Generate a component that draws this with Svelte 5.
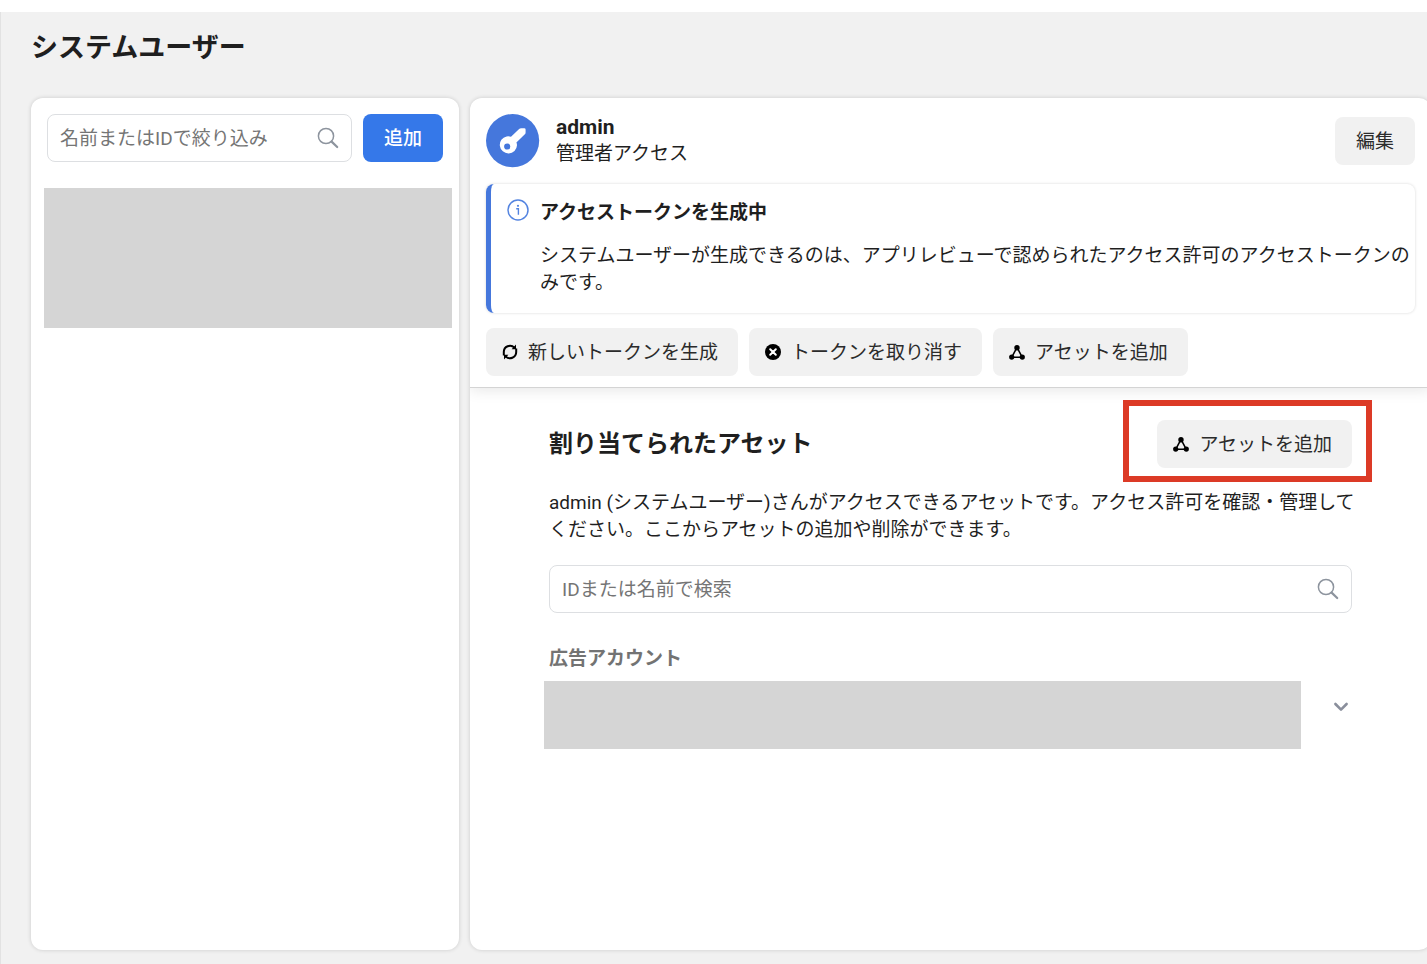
<script lang="ts">
    let userFilter = $state('');
    let assetFilter = $state('');
    let expanded = $state(false);
</script>

{#snippet searchIcon()}
    <svg class="search-icon" viewBox="0 0 22 22" width="22" height="22" fill="none" stroke="#8d949e" aria-hidden="true">
        <circle cx="9" cy="9" r="7.6" stroke-width="1.5" />
        <path d="M14.6 14.6L20.2 20" stroke-width="2.2" stroke-linecap="round" />
    </svg>
{/snippet}

{#snippet assetIcon()}
    <svg viewBox="0 0 16 16" width="16" height="16" aria-hidden="true">
        <path d="M8 3.4L2.8 13.2H13.2Z" fill="none" stroke="#000" stroke-width="1.6" />
        <circle cx="8" cy="3.8" r="2.7" />
        <circle cx="2.7" cy="13.1" r="2.6" />
        <circle cx="13.3" cy="13.1" r="2.6" />
    </svg>
{/snippet}

<div class="page">
    <h1>システムユーザー</h1>

    <div class="columns">
        <aside class="panel users">
            <div class="toolbar">
                <div class="field">
                    <input type="text" aria-label="名前またはIDで絞り込み" placeholder="名前またはIDで絞り込み" bind:value={userFilter} />
                    {@render searchIcon()}
                </div>
                <button class="primary">追加</button>
            </div>
            <div class="user-block"></div>
        </aside>

        <main class="panel detail">
            <header>
                <div class="identity">
                    <svg class="avatar" viewBox="0 0 54 54" width="54" height="54" aria-hidden="true">
                        <circle cx="26.6" cy="26.6" r="26.6" fill="#4577dc" />
                        <path fill="#fff" fill-rule="evenodd" d="M32.6 15.4Q33.8 14.2 35.4 14.2H38.2Q39.6 14.2 39.6 15.6V18.4Q39.6 19.6 38.6 20.6L30.4 28.6Q31 30 31 31.2A8.6 8.6 0 1 1 20.6 22.4Q23 22 25 22.8ZM21.2 29.4A3.1 3.1 0 1 0 21.2 35.6A3.1 3.1 0 1 0 21.2 29.4Z" />
                    </svg>
                    <div class="names">
                        <h2>admin</h2>
                        <p>管理者アクセス</p>
                    </div>
                    <button class="edit">編集</button>
                </div>

                <div class="notice">
                    <svg viewBox="0 0 22 22" width="22" height="22" fill="none" stroke="#5484e0" aria-hidden="true">
                        <circle cx="11" cy="11" r="10" stroke-width="1.5" />
                        <path d="M9.2 9.7H11.4V15.8" stroke-width="1.4" />
                        <circle cx="11" cy="6.8" r="1.1" fill="#5484e0" stroke="none" />
                    </svg>
                    <div>
                        <h3>アクセストークンを生成中</h3>
                        <p>システムユーザーが生成できるのは、アプリレビューで認められたアクセス許可のアクセストークンのみです。</p>
                    </div>
                </div>

                <div class="actions">
                    <button>
                        <svg viewBox="0 0 16 16" width="16" height="16" fill="none" stroke="#000" stroke-width="2" aria-hidden="true">
                            <path d="M1.8 11.4V8A6.2 6.2 0 0 1 12.4 3.6M14.2 4.6V8A6.2 6.2 0 0 1 3.6 12.4" />
                            <path d="M9.6 5.2H14V0.4ZM6.4 10.8H2V15.6Z" fill="#000" stroke="none" />
                        </svg>
                        新しいトークンを生成
                    </button>
                    <button>
                        <svg viewBox="0 0 16 16" width="16" height="16" aria-hidden="true">
                            <circle cx="8" cy="8" r="8" />
                            <path d="M5.2 5.2L10.8 10.8M10.8 5.2L5.2 10.8" stroke="#fff" stroke-width="2" stroke-linecap="round" />
                        </svg>
                        トークンを取り消す
                    </button>
                    <button>{@render assetIcon()}アセットを追加</button>
                </div>
            </header>

            <section>
                <div class="section-head">
                    <h2>割り当てられたアセット</h2>
                    <div class="highlight">
                        <button>{@render assetIcon()}アセットを追加</button>
                    </div>
                </div>
                <p class="description">admin (システムユーザー)さんがアクセスできるアセットです。アクセス許可を確認・管理してください。ここからアセットの追加や削除ができます。</p>
                <div class="field">
                    <input type="text" aria-label="IDまたは名前で検索" placeholder="IDまたは名前で検索" bind:value={assetFilter} />
                    {@render searchIcon()}
                </div>
                <h3>広告アカウント</h3>
                <div class="account">
                    <div class="account-block"></div>
                    <button class="toggle" aria-label="広告アカウント" aria-expanded={expanded} onclick={() => (expanded = !expanded)}>
                        <svg viewBox="0 0 16 16" width="16" height="16" fill="none" stroke="#8a8f9c" stroke-width="2.6" stroke-linecap="round" stroke-linejoin="round" aria-hidden="true">
                            <path d="M2.4 5L8 10.6L13.6 5" />
                        </svg>
                    </button>
                </div>
            </section>
        </main>
    </div>
</div>

<style>
    :global(body) {
        margin: 0;
        background: #fff;
    }
    .page {
        display: flex;
        flex-direction: column;
        box-sizing: border-box;
        min-height: calc(100vh - 12px);
        margin-top: 12px;
        padding: 16px 0 14px 30px;
        border-left: 1px solid #e2e2e2;
        background: #f1f1f1;
        color: #1f1f1f;
        font-family: Roboto, "Noto Sans CJK JP", sans-serif;
        font-size: 19px;
        line-height: 27px;
        overflow: hidden;
    }
    h1, h2, h3, p {
        margin: 0;
    }
    h1 {
        font-size: 27px;
        line-height: 40px;
    }
    h3 {
        font-size: 19px;
    }
    .columns {
        display: flex;
        flex: 1;
        gap: 11px;
        margin-top: 30px;
        /* the detail panel runs just past the window edge */
        margin-right: -4px;
    }
    .panel {
        border-radius: 12px;
        background: #fff;
        box-shadow: 0 0 4px rgba(0, 0, 0, 0.16);
    }
    .users {
        flex: 0 0 428px;
    }
    .toolbar {
        display: flex;
        gap: 11px;
        padding: 16px 16px 26px;
    }
    .toolbar .field {
        flex: 1;
    }
    .user-block {
        height: 140px;
        margin: 0 7px 0 13px;
        background: #d5d5d5;
    }
    .field {
        display: flex;
        align-items: center;
        box-sizing: border-box;
        height: 48px;
        padding: 0 12px;
        border: 1px solid #dddfe2;
        border-radius: 8px;
        background: #fff;
    }
    input {
        flex: 1;
        min-width: 0;
        padding: 0;
        border: 0;
        outline: 0;
        background: none;
        color: inherit;
        font: inherit;
    }
    input::placeholder {
        color: #757575;
        opacity: 1;
    }
    button {
        display: flex;
        align-items: center;
        gap: 10px;
        height: 48px;
        padding: 0 20px 0 16px;
        border: 0;
        border-radius: 8px;
        background: #f1f1f1;
        color: #2b2b2b;
        font: inherit;
        white-space: nowrap;
        cursor: pointer;
    }
    .primary, .edit {
        justify-content: center;
        width: 80px;
        padding: 0;
    }
    .primary {
        background: #3578e9;
        color: #fff;
        font-weight: 500;
    }
    .detail {
        flex: 1;
        min-width: 0;
        overflow: hidden;
    }
    header {
        padding: 16px 16px 11px;
        border-bottom: 1px solid #d4d4d4;
        box-shadow: 0 2px 14px rgba(0, 0, 0, 0.1);
    }
    .identity {
        display: flex;
        align-items: center;
        gap: 16px;
    }
    .names {
        flex: 1;
        padding-bottom: 1px;
    }
    .names h2 {
        font-size: 21px;
        line-height: 26px;
    }
    .notice {
        display: flex;
        gap: 11px;
        margin: 16px 0 15px;
        padding: 15px 0 17px 16px;
        border-left: 5px solid #4577dc;
        border-radius: 8px;
        box-shadow: 0 0 3px rgba(0, 0, 0, 0.16);
    }
    .notice svg {
        flex: none;
    }
    .notice p {
        margin-top: 16px;
    }
    .actions {
        display: flex;
        gap: 11px;
    }
    section {
        padding: 32px 79px;
    }
    .section-head {
        display: flex;
        align-items: center;
        justify-content: space-between;
    }
    .section-head h2 {
        font-size: 24px;
    }
    .highlight {
        position: relative;
    }
    .highlight::after {
        content: "";
        position: absolute;
        inset: -20px -20px -14px -34px;
        border: 6px solid #dc3a26;
        pointer-events: none;
    }
    .description {
        margin: 21px -12px 22px 0;
    }
    section h3 {
        margin: 32px 0 9px;
        color: #737373;
    }
    .account {
        display: flex;
        justify-content: space-between;
        margin-left: -5px;
    }
    .account-block {
        flex: 1;
        height: 68px;
        margin-right: 32px;
        background: #d5d5d5;
    }
    .toggle {
        height: 52px;
        margin-right: 3px;
        padding: 0;
        background: none;
    }
</style>
